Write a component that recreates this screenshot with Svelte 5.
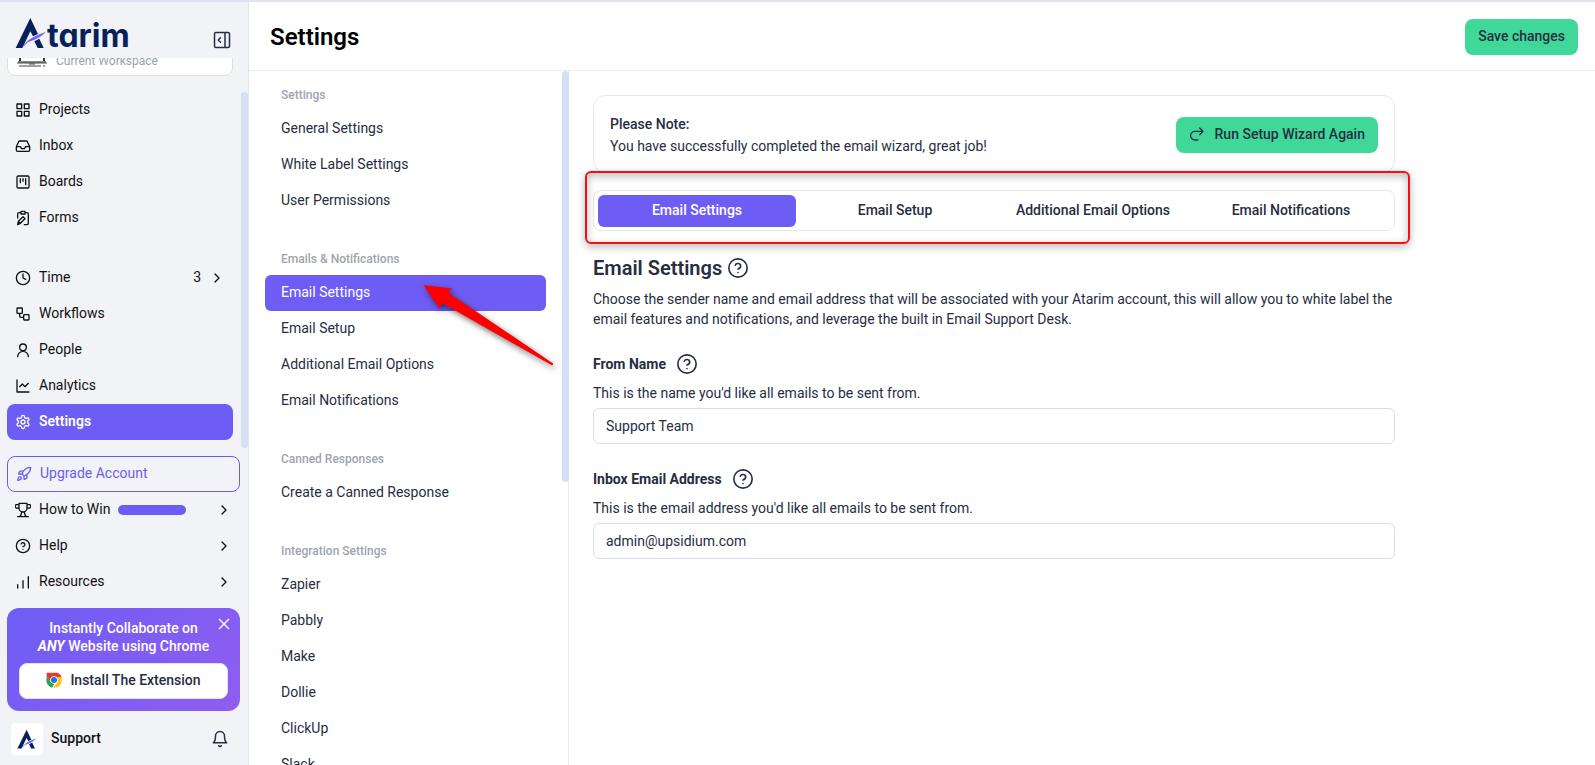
<script lang="ts">
	type NavItem = { label: string; icon: string; count?: number; active?: boolean; progress?: boolean };

	const workNav: NavItem[] = [
		{ label: 'Projects', icon: 'grid' },
		{ label: 'Inbox', icon: 'inbox' },
		{ label: 'Boards', icon: 'board' },
		{ label: 'Forms', icon: 'form' }
	];

	const accountNav: NavItem[] = [
		{ label: 'Time', icon: 'clock', count: 3 },
		{ label: 'Workflows', icon: 'workflow' },
		{ label: 'People', icon: 'person' },
		{ label: 'Analytics', icon: 'chart' },
		{ label: 'Settings', icon: 'gear', active: true }
	];

	const helpNav: NavItem[] = [
		{ label: 'How to Win', icon: 'trophy', progress: true },
		{ label: 'Help', icon: 'help' },
		{ label: 'Resources', icon: 'bars' }
	];

	const settingGroups = [
		{ title: 'Settings', items: ['General Settings', 'White Label Settings', 'User Permissions'] },
		{
			title: 'Emails & Notifications',
			items: ['Email Settings', 'Email Setup', 'Additional Email Options', 'Email Notifications']
		},
		{ title: 'Canned Responses', items: ['Create a Canned Response'] },
		{
			title: 'Integration Settings',
			items: ['Zapier', 'Pabbly', 'Make', 'Dollie', 'ClickUp', 'Slack']
		}
	];

	const tabs = ['Email Settings', 'Email Setup', 'Additional Email Options', 'Email Notifications'];

	let activeTab = $state('Email Settings');
	let fromName = $state('Support Team');
	let inboxEmail = $state('admin@upsidium.com');
	let showPromo = $state(true);

	const icons: Record<string, string> = {
		grid: 'M3 3h7v7H3zM14 3h7v7h-7zM14 14h7v7h-7zM3 14h7v7H3z',
		inbox:
			'M22 13h-6l-2 3h-4l-2-3H2M5.500 5.500 2 13v5a2 2 0 0 0 2 2h16a2 2 0 0 0 2-2v-5l-3.500-7.500A2 2 0 0 0 16.700 4.500H7.300a2 2 0 0 0-1.800 1z',
		board: 'M5 3h14a2 2 0 0 1 2 2v14a2 2 0 0 1-2 2H5a2 2 0 0 1-2-2V5a2 2 0 0 1 2-2zM8 7v6M12 7v4M16 7v9',
		form: 'M9 2h6v4H9zM16 4h2a2 2 0 0 1 2 2v14a2 2 0 0 1-2 2h-4M4 12V6a2 2 0 0 1 2-2h2M4 22l1-5 7-7 3 3-7 7zM5 17l3 3',
		clock: 'M22 12a10 10 0 1 1-20 0 10 10 0 0 1 20 0zM12 6v6l4 2',
		workflow: 'M4 3h6a1 1 0 0 1 1 1v6a1 1 0 0 1-1 1H4a1 1 0 0 1-1-1V4a1 1 0 0 1 1-1zM14 13h6a1 1 0 0 1 1 1v6a1 1 0 0 1-1 1h-6a1 1 0 0 1-1-1v-6a1 1 0 0 1 1-1zM7 11v4a2 2 0 0 0 2 2h4',
		person: 'M17 8a5 5 0 1 1-10 0 5 5 0 0 1 10 0zM20 22a8 8 0 0 0-16 0',
		chart: 'M3 3v18h18M20 8l-5 5-4-4-4 4',
		gear: 'M12.200 2h-.4a2 2 0 0 0-2 2v.2a2 2 0 0 1-1 1.700l-.4.3a2 2 0 0 1-2 0l-.2-.1a2 2 0 0 0-2.700.7l-.2.4a2 2 0 0 0 .7 2.700l.2.1a2 2 0 0 1 1 1.700v.5a2 2 0 0 1-1 1.800l-.2.1a2 2 0 0 0-.7 2.700l.2.4a2 2 0 0 0 2.700.7l.2-.1a2 2 0 0 1 2 0l.4.3a2 2 0 0 1 1 1.700v.2a2 2 0 0 0 2 2h.4a2 2 0 0 0 2-2v-.2a2 2 0 0 1 1-1.700l.4-.3a2 2 0 0 1 2 0l.2.1a2 2 0 0 0 2.700-.7l.2-.4a2 2 0 0 0-.7-2.700l-.2-.1a2 2 0 0 1-1-1.800v-.5a2 2 0 0 1 1-1.700l.2-.1a2 2 0 0 0 .7-2.700l-.2-.4a2 2 0 0 0-2.700-.7l-.2.1a2 2 0 0 1-2 0l-.4-.3a2 2 0 0 1-1-1.700V4a2 2 0 0 0-2-2zM15 12a3 3 0 1 1-6 0 3 3 0 0 1 6 0z',
		rocket:
			'M4.500 16.500c-1.500 1.300-2 5-2 5s3.700-.5 5-2c.7-.8.7-2.100-.1-2.900a2.200 2.200 0 0 0-2.900-.1zM12 15l-3-3a22 22 0 0 1 2-4A13 13 0 0 1 22 2c0 2.700-.8 7.500-6 11a22 22 0 0 1-4 2zM9 12H4s.6-3 2-4c1.600-1.100 5 0 5 0M12 15v5s3-.6 4-2c1.100-1.600 0-5 0-5',
		trophy:
			'M6 9H4a2.500 2.500 0 0 1-2-5h4M18 9h2a2.500 2.500 0 0 0 2-5h-4M4 22h16M10 15c0 3-1 5-3 7M14 15c0 3 1 5 3 7M18 2H6v7a6 6 0 0 0 12 0z',
		help: 'M22 12a10 10 0 1 1-20 0 10 10 0 0 1 20 0zM9.100 9a3 3 0 0 1 5.800 1c0 2-3 3-3 3M12 17h.01',
		bars: 'M4 21v-5M12 21V10M20 21V4',
		chevron: 'M9 18l6-6-6-6',
		bell: 'M6 8a6 6 0 0 1 12 0c0 7 3 9 3 9H3s3-2 3-9M10.300 21a2 2 0 0 0 3.400 0',
		close: 'M19 5 5 19M5 5l14 14',
		panel: 'M4 2h16a2 2 0 0 1 2 2v16a2 2 0 0 1-2 2H4a2 2 0 0 1-2-2V4a2 2 0 0 1 2-2zM16 2v20M10 9l-3 3 3 3',
		redo: 'M16 3l5 5-5 5M21 8H9a6 6 0 0 0 0 13h4'
	};
</script>

{#snippet icon(name: string)}
	<svg class="icon" viewBox="0 0 24 24" aria-hidden="true"><path d={icons[name]} /></svg>
{/snippet}

{#snippet logoMark()}
	<path fill="#07225a" d="M91 57 47 147h20q6-12 24-50l8 15 15-7z" />
	<path fill="#07225a" d="m103 127 15-8 13 28h-18z" />
	<path fill="#7562f7" d="M66 147q13-30 72-48-20 21-54 30z" />
{/snippet}

{#snippet navLink(item: NavItem, chevron: boolean)}
	<a class="nav-item" class:active={item.active} href="#{item.label}">
		{@render icon(item.icon)}
		<span class="nav-label">{item.label}</span>
		{#if item.progress}<span class="progress"></span>{/if}
		{#if item.count}<span class="nav-label count">{item.count}</span>{/if}
		{#if chevron}<span class="chevron">{@render icon('chevron')}</span>{/if}
	</a>
{/snippet}

<div class="app">
	<aside class="sidebar">
		<div class="brand">
			<a class="logo" href="#home" aria-label="Atarim">
				<svg class="logo-mark" viewBox="45 54 96 96" aria-hidden="true">{@render logoMark()}</svg>
				<span class="logo-text">tarim</span>
			</a>
			<button class="icon-button" aria-label="Collapse sidebar">{@render icon('panel')}</button>
		</div>

		<div class="sidebar-scroll">
			<div class="workspace">
				<svg class="laptop" viewBox="0 0 32 24" aria-hidden="true">
					<path d="M4 13V0h24v13" fill="none" stroke="#333" stroke-width="2" />
					<path d="M2 12h28v2H2z" fill="#888" />
					<path d="M1 14h30M3 17h22M27 17h2M13 15h6" fill="none" stroke="#444" />
				</svg>
				<span>Current Workspace</span>
			</div>
			<nav class="nav" aria-label="Work">
				{#each workNav as item (item.label)}
					{@render navLink(item, false)}
				{/each}
			</nav>
			<nav class="nav" aria-label="Account">
				{#each accountNav as item (item.label)}
					{@render navLink(item, item.count !== undefined)}
				{/each}
			</nav>
			<div class="thumb sidebar-thumb"></div>
		</div>

		<div class="sidebar-bottom">
			<a class="nav-item upgrade" href="#upgrade">
				{@render icon('rocket')}
				<span class="nav-label">Upgrade Account</span>
			</a>
			{#each helpNav as item (item.label)}
				{@render navLink(item, true)}
			{/each}

			{#if showPromo}
				<section class="promo">
					<p>Instantly Collaborate on<br /><em>ANY</em> Website using Chrome</p>
					<button class="promo-close" aria-label="Dismiss" onclick={() => (showPromo = false)}>
						{@render icon('close')}
					</button>
					<button class="install">
						<svg class="chrome" viewBox="0 0 48 48" aria-hidden="true">
							<path fill="#e33b2e" d="M2 2h33q9 4 12 14H24L12 28 2 12z" />
							<path fill="#2ba24c" d="M2 11l12 19 12 5-8 12Q2 42 1 24z" />
							<path fill="#fcc31e" d="M47 15H24l12 13-14 19q25 1 25-23z" />
							<circle cx="24" cy="24" r="11" fill="#fff" />
							<circle cx="24" cy="24" r="9" fill="#2374e8" />
						</svg>
						Install The Extension
					</button>
				</section>
			{/if}

			<div class="user">
				<span class="avatar">
					<svg viewBox="45 54 96 96" aria-hidden="true">{@render logoMark()}</svg>
				</span>
				<strong class="nav-label">Support</strong>
				<button class="icon-button" aria-label="Notifications">{@render icon('bell')}</button>
			</div>
		</div>
	</aside>

	<div class="page">
		<header class="page-header">
			<h1>Settings</h1>
			<button class="primary">Save changes</button>
		</header>

		<div class="page-body">
			<nav class="settings-nav" aria-label="Settings">
				{#each settingGroups as group (group.title)}
					<section>
						<h2>{group.title}</h2>
						{#each group.items as item (item)}
							<a class="settings-link" class:active={item === 'Email Settings'} href="#{item}">
								{item}
								{#if item === 'Email Settings'}
									<svg class="arrow" viewBox="0 0 399 249" aria-hidden="true">
										<path d="M0 0 89 11 74 22 394 238q1 5-4 6L57 55 49 71z" />
									</svg>
								{/if}
							</a>
						{/each}
					</section>
				{/each}
				<div class="thumb settings-thumb"></div>
			</nav>

			<main class="content">
				<section class="notice">
					<div>
						<strong>Please Note:</strong>
						<p>You have successfully completed the email wizard, great job!</p>
					</div>
					<button class="primary">{@render icon('redo')}Run Setup Wizard Again</button>
				</section>

				<div class="tabs" role="tablist">
					{#each tabs as tab (tab)}
						<button
							class="tab"
							class:active={tab === activeTab}
							role="tab"
							aria-selected={tab === activeTab}
							onclick={() => (activeTab = tab)}>{tab}</button
						>
					{/each}
					<div class="highlight"></div>
				</div>

				<h2 class="section-title">Email Settings {@render icon('help')}</h2>
				<p class="intro">
					Choose the sender name and email address that will be associated with your Atarim account, this will
					allow you to white label the email features and notifications, and leverage the built in Email Support
					Desk.
				</p>

				<div class="field">
					<label for="from-name">From Name {@render icon('help')}</label>
					<p>This is the name you'd like all emails to be sent from.</p>
					<input id="from-name" type="text" bind:value={fromName} />
				</div>

				<div class="field">
					<label for="inbox-email">Inbox Email Address {@render icon('help')}</label>
					<p>This is the email address you'd like all emails to be sent from.</p>
					<input id="inbox-email" type="email" bind:value={inboxEmail} />
				</div>
			</main>
		</div>
	</div>
</div>

<style>
	:global(body) {
		background: #fff;
	}

	.app {
		--purple: #6d5df4;
		--ink: #272d42;
		display: flex;
		box-sizing: border-box;
		height: 100vh;
		overflow: hidden;
		border-top: 2px solid #e2e2f4;
		font: 400 14px/20px Roboto, sans-serif;
		color: var(--ink);
	}

	.app *,
	.app *::before {
		box-sizing: border-box;
	}

	h1,
	h2,
	p {
		margin: 0;
	}

	a {
		color: inherit;
		text-decoration: none;
	}

	button,
	input {
		font: inherit;
		color: inherit;
	}

	button {
		display: inline-flex;
		align-items: center;
		justify-content: center;
		padding: 0;
		border: 0;
		background: none;
		cursor: pointer;
	}

	.icon {
		flex: none;
		width: 16px;
		height: 16px;
		fill: none;
		stroke: currentColor;
		stroke-width: 2;
		stroke-linecap: round;
		stroke-linejoin: round;
	}

	.thumb {
		position: absolute;
		right: 0;
		width: 7px;
		border-radius: 4px;
		background: #d5e1f3;
	}

	.sidebar {
		display: flex;
		flex: none;
		flex-direction: column;
		width: 249px;
		border-right: 1px solid #e2e2ea;
		background: #f2f3f6;
		color: #111;
	}

	.brand {
		display: flex;
		flex: none;
		align-items: flex-end;
		justify-content: space-between;
		height: 56px;
		padding: 0 17px 9px 15px;
	}

	.logo {
		display: flex;
		align-items: flex-end;
		color: #07225a;
	}

	.logo-mark {
		width: 32px;
		height: 32px;
	}

	.logo-text {
		font: 700 32px/26px Inter, sans-serif;
		font-feature-settings: 'cv11';
	}

	.icon-button {
		color: var(--ink);
	}

	.icon-button .icon {
		width: 18px;
		height: 18px;
	}

	.sidebar-scroll {
		position: relative;
		flex: 1;
		overflow: hidden;
		padding: 0 15px 0 7px;
	}

	/* the list sits scrolled down, so the card's top is cut off */
	.workspace {
		display: flex;
		align-items: center;
		gap: 8px;
		height: 48px;
		margin-top: -30px;
		padding: 18px 8px 0;
		border: 1px solid #dedeea;
		border-radius: 8px;
		background: #fff;
		font-size: 12px;
		line-height: 16px;
		color: #9aa0ae;
	}

	.laptop {
		width: 32px;
		height: 24px;
	}

	.nav {
		margin-top: 16px;
	}

	.nav + .nav {
		margin-top: 24px;
	}

	.nav-item {
		display: flex;
		align-items: center;
		gap: 8px;
		height: 36px;
		padding: 0 8px;
		border-radius: 8px;
	}

	.nav-item.active {
		background: var(--purple);
		color: #fff;
		font-weight: 600;
	}

	.nav-label {
		padding-bottom: 2px;
	}

	.count,
	.chevron {
		display: flex;
		margin-left: auto;
	}

	.count + .chevron {
		margin-left: 0;
	}

	.progress {
		width: 68px;
		height: 10px;
		border-radius: 5px;
		background: var(--purple);
	}

	.sidebar-thumb {
		top: 34px;
		bottom: 0;
	}

	.sidebar-bottom {
		padding: 8px 8px 10px 7px;
	}

	.upgrade {
		border: 1px solid var(--purple);
		color: var(--purple);
	}

	.promo {
		position: relative;
		margin: 8px 0 12px;
		padding: 11px 12px 12px;
		border-radius: 12px;
		background: linear-gradient(135deg, #6d5df6, #905df0);
		color: #fff;
		text-align: center;
	}

	.promo p {
		margin-bottom: 8px;
		font-weight: 500;
		line-height: 18px;
	}

	.promo em {
		font-weight: 700;
	}

	.promo-close {
		position: absolute;
		top: 8px;
		right: 8px;
	}

	.install {
		gap: 8px;
		width: 100%;
		height: 36px;
		padding-bottom: 2px;
		border: 1px solid #e2e2f4;
		border-radius: 8px;
		background: #fff;
		color: var(--ink);
		font-weight: 500;
	}

	.chrome {
		width: 16px;
		height: 16px;
	}

	.user {
		display: flex;
		align-items: center;
		gap: 8px;
		padding: 0 11px 0 4px;
	}

	.user strong {
		font-weight: 500;
	}

	.user .icon-button {
		margin-left: auto;
	}

	.avatar {
		display: flex;
		align-items: center;
		justify-content: center;
		width: 32px;
		height: 32px;
		border-radius: 4px;
		background: #fff;
	}

	.avatar svg {
		width: 20px;
		height: 20px;
	}

	.page {
		display: flex;
		flex: 1;
		flex-direction: column;
		min-width: 0;
	}

	.page-header {
		display: flex;
		flex: none;
		align-items: center;
		justify-content: space-between;
		height: 69px;
		padding: 2px 17px 0 21px;
		border-bottom: 1px solid #ececf4;
	}

	h1 {
		font-size: 24px;
		line-height: 32px;
		font-weight: 600;
		color: #000;
	}

	.primary {
		gap: 10px;
		height: 36px;
		padding: 0 13px 2px;
		border-radius: 8px;
		background: #40d899;
		font-weight: 500;
	}

	.page-body {
		display: flex;
		flex: 1;
		min-height: 0;
	}

	.settings-nav {
		position: relative;
		flex: none;
		width: 320px;
		padding: 15px 22px 0 16px;
		border-right: 1px solid #ececf4;
	}

	.settings-nav section {
		margin-bottom: 31px;
	}

	.settings-nav h2 {
		padding: 0 16px 7px;
		font-size: 12px;
		line-height: 18px;
		font-weight: 500;
		color: #a0a3b1;
	}

	.settings-link {
		position: relative;
		display: flex;
		align-items: center;
		height: 36px;
		padding: 0 16px 2px;
		border-radius: 6px;
	}

	.settings-link.active {
		z-index: 1;
		background: var(--purple);
		color: #fff;
	}

	.settings-thumb {
		top: 0;
		right: -1px;
		height: 411px;
	}

	.arrow {
		position: absolute;
		top: 10px;
		left: 158px;
		width: 132px;
		height: 82px;
		overflow: visible;
		fill: #fe0000;
		filter: drop-shadow(2px 3px 3px #0008);
		pointer-events: none;
	}

	.content {
		flex: 1;
		max-width: 850px;
		padding: 24px;
	}

	.notice {
		display: flex;
		align-items: center;
		justify-content: space-between;
		padding: 17px 16px 15px;
		border: 1px solid #e5e6ea;
		border-radius: 12px;
		line-height: 22px;
	}

	.notice strong {
		font-weight: 500;
	}

	.tabs {
		position: relative;
		display: grid;
		grid-template-columns: repeat(4, 1fr);
		margin: 17px 0 23px;
		padding: 4px 4px 3px;
		border: 1px solid #e5e6ea;
		border-radius: 8px;
	}

	.tab {
		height: 32px;
		padding-bottom: 2px;
		border-radius: 6px;
		font-weight: 500;
	}

	.tab.active {
		background: var(--purple);
		color: #fff;
	}

	.highlight {
		position: absolute;
		inset: -20px -16px -14px -9px;
		border: 2px solid #f90d0d;
		border-radius: 6px;
		box-shadow: 0 3px 8px #0004, inset 0 3px 8px #0004;
		pointer-events: none;
	}

	.section-title {
		display: flex;
		align-items: center;
		gap: 5px;
		font-size: 20px;
		line-height: 28px;
		font-weight: 600;
	}

	.section-title .icon,
	.field .icon {
		width: 22px;
		height: 22px;
		stroke-width: 1.800;
	}

	.intro {
		margin: 7px 0 23px;
	}

	.field {
		margin-bottom: 23px;
	}

	.field label {
		display: flex;
		align-items: center;
		gap: 10px;
		height: 24px;
		font-weight: 700;
	}

	.field p {
		margin: 7px 0 5px;
	}

	.field input {
		display: block;
		width: 100%;
		height: 36px;
		padding: 0 12px;
		border: 1px solid #dcdee6;
		border-radius: 6px;
		background: #fff;
		outline: none;
	}
</style>
